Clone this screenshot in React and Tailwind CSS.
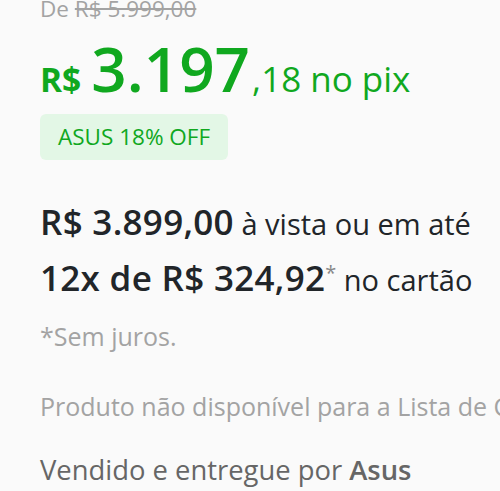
export default function App() {
  return (
    <div
      className="min-h-screen overflow-hidden bg-[#fafafa] px-10 text-[#212529]"
      style={{ fontFamily: "'Open Sans', 'Noto Sans', sans-serif" }}
    >
      {/* old price, cut at the top */}
      <p className="-mt-[7px] text-[22.5px] leading-[32px] text-[#a3a3a3]">
        De <span className="line-through">R$ 5.999,00</span>
      </p>

      {/* pix price */}
      <div className="mt-[10px] flex h-[66px] items-baseline whitespace-nowrap text-[#10a81f]">
        <span className="mr-[10px] text-[33.5px] font-bold leading-[40px]">R$</span>
        <span className="text-[62px] font-semibold leading-[66px]">3.197</span>
        <span className="ml-[2px] text-[35px] leading-[40px]">,18 no pix</span>
      </div>

      <div className="mt-[13px] inline-flex h-[46px] items-center rounded-md bg-[#e3f7e6] px-[18px] text-[22.5px] text-[#10a81f]">
        ASUS 18% OFF
      </div>

      {/* card price */}
      <div className="mt-[35px] whitespace-nowrap text-[29px] leading-[54px]">
        <p>
          <span className="text-[35px] font-semibold tracking-[0.3px]">R$ 3.899,00</span> à vista ou em até
        </p>
        <p>
          <span className="text-[35px] font-semibold tracking-[0.3px]">12x de R$ 324,92</span>
          <span className="relative -top-[11px] text-[20px] text-[#888]">*</span> no cartão
        </p>
      </div>

      <p className="mt-[9px] text-[25px] leading-[32px] text-[#a3a3a3]">*Sem juros.</p>

      <p className="mt-[38px] whitespace-nowrap text-[25px] leading-[32px] text-[#a3a3a3]">
        Produto não disponível para a Lista de Casamento
      </p>

      <p className="mt-[30px] whitespace-nowrap text-[27.4px] leading-[36px] text-[#666]">
        Vendido e entregue por <span className="font-semibold">Asus</span>
      </p>
    </div>
  );
}
